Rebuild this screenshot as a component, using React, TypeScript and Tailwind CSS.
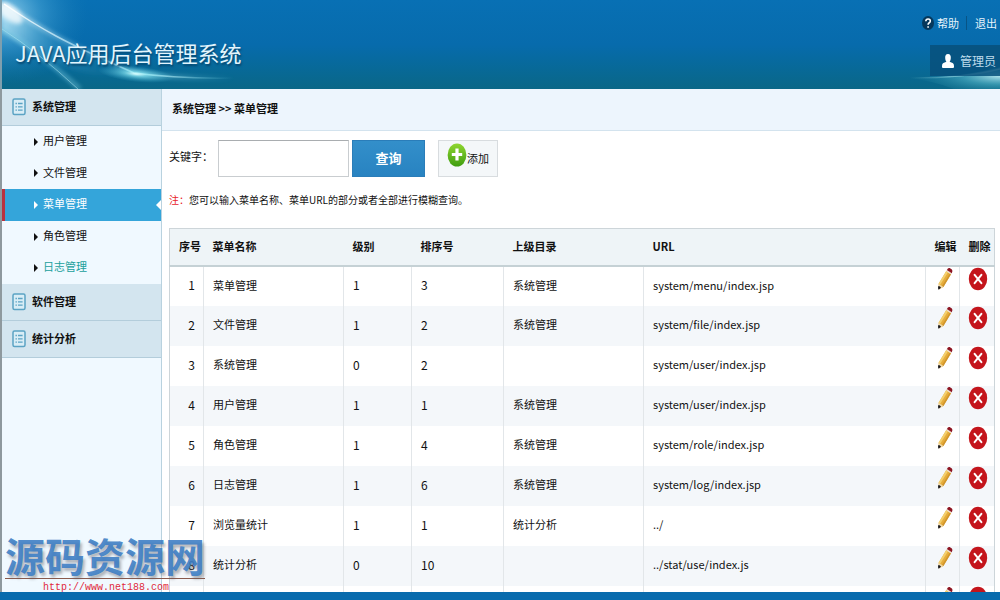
import React from "react";

type MenuRow = {
  name: string;
  level: number;
  order: number;
  parent: string;
  url: string;
};

const rows: MenuRow[] = [
  { name: "菜单管理", level: 1, order: 3, parent: "系统管理", url: "system/menu/index.jsp" },
  { name: "文件管理", level: 1, order: 2, parent: "系统管理", url: "system/file/index.jsp" },
  { name: "系统管理", level: 0, order: 2, parent: "", url: "system/user/index.jsp" },
  { name: "用户管理", level: 1, order: 1, parent: "系统管理", url: "system/user/index.jsp" },
  { name: "角色管理", level: 1, order: 4, parent: "系统管理", url: "system/role/index.jsp" },
  { name: "日志管理", level: 1, order: 6, parent: "系统管理", url: "system/log/index.jsp" },
  { name: "浏览量统计", level: 1, order: 1, parent: "统计分析", url: "../" },
  { name: "统计分析", level: 0, order: 10, parent: "", url: "../stat/use/index.js" },
];

function PencilIcon() {
  return (
    <svg width="16" height="24" viewBox="0 0 16 24" aria-hidden="true">
      <path d="M9.3 4 L14 7.3 L6.4 20 L2 22.2 L1.6 16.8 Z" fill="#e6ad3c" />
      <path d="M9.3 4 L11 5.2 L3.2 17.8 L1.6 16.8 Z" fill="#f3cf6e" />
      <path d="M12.8 6.5 L14 7.3 L6.4 20 L5 19 Z" fill="#d0952c" />
      <path d="M9.2 4.1 L10 2.8 L14.8 6.1 L14 7.4 Z" fill="#e9dccb" />
      <path d="M9.9 2.9 Q11 .4 12.6 1 L14.9 2.6 Q16 3.8 14.8 6.2 Z" fill="#8d1421" />
      <path d="M1.6 16.8 L6.4 20 L2 22.4 Z" fill="#efd7a8" />
      <path d="M1.4 19 Q3 18.8 4 20.8 L1.6 22.8 Q.4 21.6 1.4 19Z" fill="#17171b" />
    </svg>
  );
}

function DeleteIcon() {
  return (
    <svg width="20" height="24" viewBox="0 0 20 24" aria-hidden="true">
      <ellipse cx="10" cy="12" rx="9.2" ry="11.2" fill="#c4151c" />
      <path d="M6.6 7.8 L13.4 16.2 M13.4 7.8 L6.6 16.2" stroke="#fff" strokeWidth="2" strokeLinecap="round" />
    </svg>
  );
}

function ListIcon() {
  return (
    <svg width="14" height="18" viewBox="0 0 14 18" aria-hidden="true" className="shrink-0">
      <rect x="1" y="1" width="12" height="15.6" rx="1.5" fill="#d9edf6" stroke="#5ba3c4" strokeWidth="1.5" />
      <path d="M3.5 5.5h1.4M3.5 8.8h1.4M3.5 12.1h1.4M6 5.5h4.6M6 8.8h4.6M6 12.1h4.6" stroke="#5ba3c4" strokeWidth="1.3" />
    </svg>
  );
}

function HeaderGlow() {
  return (
    <svg className="absolute left-0 top-0" width="260" height="89" viewBox="0 0 260 89" aria-hidden="true">
      <defs>
        <radialGradient id="corner" cx=".5" cy=".5" r=".5">
          <stop offset="0" stopColor="#a8dff5" stopOpacity=".9" />
          <stop offset=".45" stopColor="#4fabd8" stopOpacity=".5" />
          <stop offset="1" stopColor="#1b7fb4" stopOpacity="0" />
        </radialGradient>
        <radialGradient id="spark">
          <stop offset="0" stopColor="#dcffff" />
          <stop offset=".3" stopColor="#7fe0ee" stopOpacity=".7" />
          <stop offset="1" stopColor="#3fb0cf" stopOpacity="0" />
        </radialGradient>
        <linearGradient id="beam" x1="0" x2="1">
          <stop offset="0" stopColor="#fff" />
          <stop offset=".45" stopColor="#8fd3ee" stopOpacity=".6" />
          <stop offset=".58" stopColor="#d5fbff" />
          <stop offset="1" stopColor="#5fc6de" stopOpacity="0" />
        </linearGradient>
        <linearGradient id="veil" x1="0" x2="1">
          <stop offset="0" stopColor="#b9e6f7" stopOpacity=".7" />
          <stop offset=".4" stopColor="#4fabd0" stopOpacity=".25" />
          <stop offset="1" stopColor="#2f93bb" stopOpacity="0" />
        </linearGradient>
        <filter id="soft" x="-30%" y="-30%" width="160%" height="160%">
          <feGaussianBlur stdDeviation="2" />
        </filter>
      </defs>
      <ellipse cx="2" cy="14" rx="84" ry="70" fill="url(#corner)" />
      <path d="M0 2 Q30 22 54 36 T132 73 Q96 80 62 66 T0 30Z" fill="url(#veil)" filter="url(#soft)" />
      <path d="M2 4 Q30 23 54 36 T132 73 Q176 79 232 78" fill="none" stroke="url(#beam)" strokeWidth="4" opacity=".5" filter="url(#soft)" />
      <path d="M2 4 Q30 23 54 36 T132 73 Q176 79 232 78" fill="none" stroke="url(#beam)" strokeWidth="1.5" />
      <path d="M0 29 Q36 52 78 89" fill="none" stroke="#7fd0e6" strokeWidth="4" opacity=".5" filter="url(#soft)" />
      <path d="M0 29 Q36 52 76 89" fill="none" stroke="#a9e3f1" strokeWidth="1" opacity=".55" />
      <ellipse cx="8" cy="13" rx="15" ry="7" fill="#fff" opacity=".75" transform="rotate(38 8 13)" filter="url(#soft)" />
      <ellipse cx="134" cy="74" rx="38" ry="8" fill="url(#spark)" transform="rotate(6 134 74)" />
    </svg>
  );
}

function AccountGlow() {
  return (
    <svg className="absolute bottom-0 right-0" width="96" height="26" viewBox="0 0 96 26" aria-hidden="true">
      <defs>
        <radialGradient id="flare" cx="1" cy=".4" r="1">
          <stop offset="0" stopColor="#c8f3f8" stopOpacity=".9" />
          <stop offset=".4" stopColor="#58b9c9" stopOpacity=".55" />
          <stop offset="1" stopColor="#0c6d8b" stopOpacity="0" />
        </radialGradient>
        <linearGradient id="flareLine" x1="0" x2="1">
          <stop offset="0" stopColor="#8fd6e2" stopOpacity="0" />
          <stop offset="1" stopColor="#c9f4f8" />
        </linearGradient>
      </defs>
      <path d="M0 14 Q55 16 96 4 V26 H50 Q30 18 0 14Z" fill="url(#flare)" />
      <path d="M6 15 Q62 15 96 6" fill="none" stroke="url(#flareLine)" strokeWidth="1.5" />
    </svg>
  );
}

function Section({ title }: { title: string }) {
  return (
    <button
      type="button"
      className="flex h-[37px] w-full items-center gap-[6px] border-b border-[#b3cddb] bg-[#d3e5ef] pl-[10px] text-left text-[11px] font-bold"
    >
      <ListIcon />
      <span className="pb-[2px]">{title}</span>
    </button>
  );
}

function SubItem({ title, active, tinted }: { title: string; active?: boolean; tinted?: boolean }) {
  const tone = active
    ? "bg-[#34a5da] text-white border-[#b8323f]"
    : tinted
      ? "text-[#21a09c] border-transparent"
      : "border-transparent";
  return (
    <li className="flex flex-1">
      <a href="#" className={`relative flex flex-1 items-center gap-[5px] border-l-[3px] pl-[29px] text-[11px] ${tone}`}>
        <svg width="4" height="8" viewBox="0 0 4 8" aria-hidden="true">
          <path d="M0 0 L4 4 L0 8Z" fill={active ? "#fff" : "#111"} />
        </svg>
        <span className="pb-[3px]">{title}</span>
        {active && (
          <svg className="absolute right-0 top-[11px]" width="5" height="10" viewBox="0 0 5 10" aria-hidden="true">
            <path d="M5 0 L0 5 L5 10Z" fill="#fff" />
          </svg>
        )}
      </a>
    </li>
  );
}

const cell = "border-r border-[#e2e6e9] pl-[9px] pb-[2px]";
const head = "whitespace-nowrap pl-[9px] pb-[2px]";

export default function App() {
  return (
    <div className="relative flex h-screen flex-col overflow-hidden border-b-8 border-[#086bad] bg-white font-['Noto_Sans_CJK_SC','Noto_Sans',sans-serif] text-[#111]">
      <header className="relative flex h-[89px] shrink-0 items-center justify-between border-l-2 border-[#7f9fae] bg-linear-to-b from-[#0870b4] via-[#076bac] via-50% to-[#0a6787]">
        <HeaderGlow />
        <AccountGlow />
        <h1 className="relative pl-[13px] pt-[14px] text-[22px] leading-[36px] text-[#e3f5fd] [text-shadow:1px_2px_2px_#06466e]">
          JAVA应用后台管理系统
        </h1>
        <div className="relative flex flex-col items-end gap-[11px] self-start pt-[12px] text-[12px] text-[#e6f3fb]">
          <nav className="flex h-[22px] items-center pr-[3px] text-[11px]">
            <a href="#" className="flex items-center gap-[3px]">
              <svg width="12" height="14" viewBox="0 0 12 14" aria-hidden="true">
                <ellipse cx="6" cy="7" rx="6" ry="7" fill="#06385c" />
                <path d="M3.8 5.2 Q3.9 3 6.1 3 Q8.3 3 8.3 5 Q8.3 6.2 7 7 Q6.1 7.6 6.1 8.7 M6.1 10.2 V11.7" fill="none" stroke="#fff" strokeWidth="1.6" />
              </svg>
              <span>帮助</span>
            </a>
            <span className="ml-[7px] h-[14px] w-px bg-[#075486]" />
            <a href="#" className="ml-[8px]">退出</a>
          </nav>
          <div className="flex h-[31px] items-center gap-[6px] bg-[#07507b]/85 pl-[12px] pr-[4px] text-[#bedcec]">
            <svg width="12" height="14" viewBox="0 0 12 14" aria-hidden="true">
              <path d="M6 0 C8.2 0 9 1.8 8.8 4 C8.7 5.8 8.3 7 7.6 7.8 L10.6 9 Q12 9.6 12 12 V13 Q12 14 11 14 H1 Q0 14 0 13 V12 Q0 9.6 1.4 9 L4.4 7.8 C3.7 7 3.3 5.8 3.2 4 C3 1.8 3.8 0 6 0Z" fill="#fff" />
            </svg>
            <span>管理员</span>
          </div>
        </div>
      </header>

      <div className="flex min-h-0 flex-1">
        <aside className="w-[162px] shrink-0 border-l-2 border-r border-l-[#8e999e] border-r-[#b9d2df] bg-[#f0f9ff]">
          <Section title="系统管理" />
          <ul className="flex h-[158px] flex-col">
            <SubItem title="用户管理" />
            <SubItem title="文件管理" />
            <SubItem title="菜单管理" active />
            <SubItem title="角色管理" />
            <SubItem title="日志管理" tinted />
          </ul>
          <Section title="软件管理" />
          <Section title="统计分析" />
        </aside>

        <main className="flex min-w-0 flex-1 flex-col">
          <div className="flex h-[42px] shrink-0 items-center border-b border-[#d3e3ee] bg-[#edf5fd] pb-[2px] pl-[10px] text-[11px] font-bold">
            系统管理 &gt;&gt; 菜单管理
          </div>
          <form className="flex shrink-0 items-center pl-[7px] pt-[9px]" onSubmit={(e) => e.preventDefault()}>
            <label htmlFor="keyword" className="w-[49px] pb-[4px] text-[11px]">关键字：</label>
            <input id="keyword" type="text" className="h-[37px] w-[131px] border border-[#c9cdd0] border-t-[#a9adb0] bg-white px-2 text-[12px] outline-none" />
            <button type="submit" className="ml-[3px] h-[37px] w-[73px] border border-[#2a7db9] bg-linear-to-b from-[#338fca] to-[#2883c1] pb-[2px] text-[13px] font-bold text-white">
              查询
            </button>
            <button type="button" className="ml-[13px] flex h-[37px] w-[60px] items-center justify-center border border-[#d8dcdf] bg-[#f4f7f9] text-[11px]">
              <svg className="mb-[8px]" width="20" height="24" viewBox="0 0 20 24" aria-hidden="true">
                <defs>
                  <linearGradient id="plus" x1="0" x2="0" y1="0" y2="1">
                    <stop offset="0" stopColor="#8fd630" />
                    <stop offset="1" stopColor="#3f9d10" />
                  </linearGradient>
                </defs>
                <ellipse cx="10" cy="12" rx="9.4" ry="11.6" fill="url(#plus)" />
                <path d="M10 5.5 V17.5 M4.8 11.5 H15.2" stroke="#fff" strokeWidth="3.2" />
              </svg>
              <span>添加</span>
            </button>
          </form>
          <p className="shrink-0 pb-[19px] pl-[7px] pt-[14px] text-[10px] leading-[18px]">
            <span className="text-[#e8232a]">注：</span>您可以输入菜单名称、菜单URL的部分或者全部进行模糊查询。
          </p>
          <div className="min-h-0 flex-1 overflow-hidden pl-[7px] pr-[5px]">
            <table className="w-full table-fixed border-collapse border border-[#cdd5d9] text-[12px]">
              <colgroup>
                <col className="w-[34px]" />
                <col className="w-[140px]" />
                <col className="w-[68px]" />
                <col className="w-[92px]" />
                <col className="w-[140px]" />
                <col />
                <col className="w-[34px]" />
                <col className="w-[35px]" />
              </colgroup>
              <thead>
                <tr className="h-[37px] border-b-2 border-[#c5d1d5] bg-[#eef4f7] text-left text-[11px]">
                  <th className={head}>序号</th>
                  <th className={head}>菜单名称</th>
                  <th className={head}>级别</th>
                  <th className={head}>排序号</th>
                  <th className={head}>上级目录</th>
                  <th className={head}>URL</th>
                  <th className={head}>编辑</th>
                  <th className={head}>删除</th>
                </tr>
              </thead>
              <tbody>
                {rows.map((row, i) => (
                  <tr key={i} className="h-[40px] even:bg-[#f4f7fa]">
                    <td className="border-r border-[#e2e6e9] pb-[2px] pr-[8px] text-right">{i + 1}</td>
                    <td className={`${cell} text-[11px]`}>{row.name}</td>
                    <td className={cell}>{row.level}</td>
                    <td className={cell}>{row.order}</td>
                    <td className={`${cell} text-[11px]`}>{row.parent}</td>
                    <td className={`${cell} text-[11px]`}>{row.url}</td>
                    <td className="border-r border-[#e2e6e9] pl-[11px] align-top">
                      <button type="button" aria-label="编辑" className="block"><PencilIcon /></button>
                    </td>
                    <td className="pl-[8px] align-top">
                      <button type="button" aria-label="删除" className="block"><DeleteIcon /></button>
                    </td>
                  </tr>
                ))}
                <tr className="h-[40px]">
                  {[0, 1, 2, 3, 4, 5].map((n) => (
                    <td key={n} className={cell} />
                  ))}
                  <td className="border-r border-[#e2e6e9] pl-[11px] align-top">
                    <button type="button" aria-label="编辑" className="block"><PencilIcon /></button>
                  </td>
                  <td className="pl-[8px] align-top">
                    <button type="button" aria-label="删除" className="block"><DeleteIcon /></button>
                  </td>
                </tr>
              </tbody>
            </table>
          </div>
        </main>
      </div>

      <div className="pointer-events-none absolute bottom-0 left-[5px] w-[200px] text-center">
        <div className="border-b border-[#8a5a4c] pb-[2px] text-[40px] font-bold leading-[42px] text-[#3c7dc4]/90 [text-shadow:2px_3px_3px_rgba(90,90,100,0.45)]">
          源码资源网
        </div>
        <div className="h-[13px] pl-[2px] pt-[2px] font-['Liberation_Mono',monospace] text-[10px] leading-[14px] text-[#e02a3c]">http://www.net188.com</div>
      </div>
    </div>
  );
}
